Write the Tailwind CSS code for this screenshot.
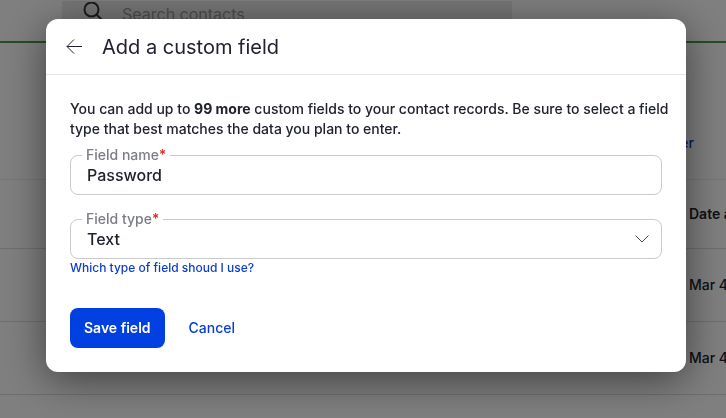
<!DOCTYPE html>
<html lang="en">
<head>
  <meta charset="UTF-8">
  <meta name="viewport" content="width=device-width, initial-scale=1.0">
  <title>Contacts</title>
  <script src="https://cdn.jsdelivr.net/npm/@tailwindcss/browser@4"></script>
</head>

<body class="h-screen overflow-hidden bg-white font-['Inter',sans-serif] text-sm text-[#20232d]">
  <!-- Contacts page -->
  <header class="flex h-[43px] items-end border-b-2 border-[#4a9a4e] px-[62px]">
    <label class="flex h-10 w-[450px] items-center gap-4 bg-[#ebebeb] pb-3.5 pl-5">
      <svg class="size-6" viewBox="0 0 24 24" fill="none" stroke="#38393f" stroke-width="2">
        <circle cx="9.5" cy="7.5" r="7"></circle>
        <path d="M14.5 12.5L22 20"></path>
      </svg>
      <input type="search" placeholder="Search contacts" aria-label="Search contacts" class="min-w-0 flex-1 bg-transparent text-base outline-none placeholder:text-[#9a9a9a]">
    </label>
  </header>
  <main class="overflow-hidden">
    <div class="flex h-[136px] items-center justify-end pt-16 pr-8">
      <a href="#" class="font-medium text-[#0b3dd0]">Filter</a>
    </div>
    <table class="w-full table-fixed border-t border-[#ececec] text-left whitespace-nowrap">
      <thead>
        <tr class="h-[69px] border-b border-[#dcdcdc]">
          <th></th>
          <th class="w-[37px] overflow-hidden font-semibold">Date added</th>
        </tr>
      </thead>
      <tbody class="font-medium">
        <tr class="h-[73px] border-b border-[#dcdcdc]"><td></td><td class="overflow-hidden">Mar 4, 2024</td></tr>
        <tr class="h-[73px] border-b border-[#dcdcdc]"><td></td><td class="overflow-hidden">Mar 4, 2024</td></tr>
      </tbody>
    </table>
  </main>

  <!-- Modal -->
  <div class="fixed inset-0 bg-black/50 pt-[19px] pr-10 pl-[46px]">
    <div role="dialog" aria-modal="true" aria-labelledby="title" class="mx-auto max-w-[640px] rounded-xl bg-white shadow-[0_8px_40px_rgba(0,0,0,0.5)]">
      <div class="flex h-14 items-center gap-5 border-b border-[#e3e4e6] px-5">
        <button type="button" aria-label="Back">
          <svg class="size-4" viewBox="0 0 16 16" fill="none" stroke="#20232d">
            <path d="M16 7.5H1M8 0.5L1 7.5l7 7"></path>
          </svg>
        </button>
        <h1 id="title" class="text-xl">Add a custom field</h1>
      </div>
      <form class="p-6">
        <p class="-mr-3 font-medium leading-5">You can add up to <b class="font-bold">99 more</b> custom fields to your contact records. Be sure to select a field type that best matches the data you plan to enter.</p>

        <div class="relative mt-4">
          <label for="fieldName" class="absolute -top-2 left-3 bg-white px-1 font-medium leading-4 text-[#7b7d86]">Field name<span class="text-[#d92b1c]">*</span></label>
          <input id="fieldName" type="text" value="Password" class="h-10 w-full rounded-lg border border-[#c9cacd] px-4 text-base font-medium outline-none">
        </div>

        <div class="relative mt-6">
          <label for="fieldType" class="absolute -top-2 left-3 bg-white px-1 font-medium leading-4 text-[#7b7d86]">Field type<span class="text-[#d92b1c]">*</span></label>
          <select id="fieldType" class="h-10 w-full appearance-none rounded-lg border border-[#c9cacd] px-4 text-base font-medium outline-none">
            <option>Text</option>
          </select>
          <svg class="pointer-events-none absolute top-4 right-3 h-2 w-4" viewBox="0 0 16 8" fill="none" stroke="#454850">
            <path d="M1.5 0.5L8 7l6.5-6.5"></path>
          </svg>
        </div>
        <a href="#" class="mt-px block text-xs font-medium text-[#0b3dd0]">Which type of field shoud I use?</a>

        <div class="mt-8 flex gap-6">
          <button type="button" class="h-10 rounded-lg bg-[#003fe0] px-3.5 font-semibold text-white">Save field</button>
          <button type="button" class="font-medium text-[#0b3dd0]">Cancel</button>
        </div>
      </form>
    </div>
  </div>
</body>
</html>
